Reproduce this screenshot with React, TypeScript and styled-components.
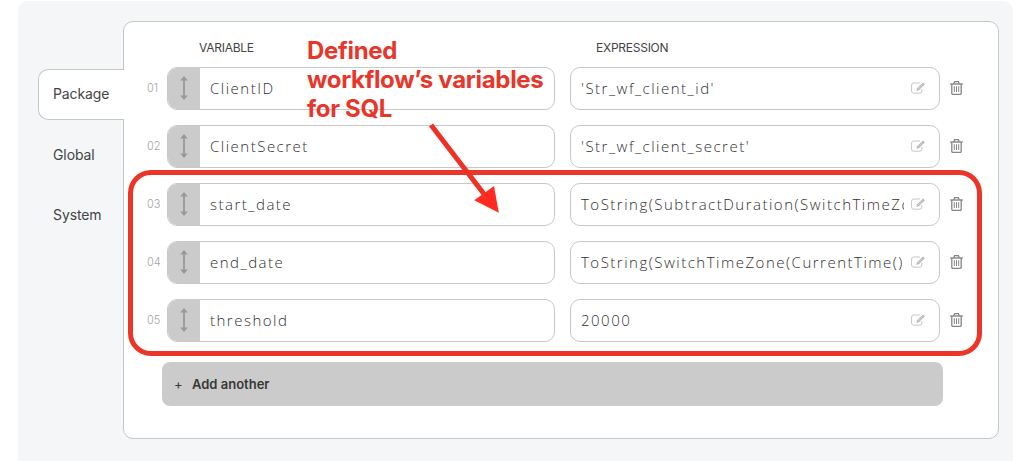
import styled, { createGlobalStyle } from 'styled-components';

interface Variable {
    name: string;
    expression: string;
}

const tabs = ['Package', 'Global', 'System'];

const variables: Variable[] = [
    { name: 'ClientID', expression: "'Str_wf_client_id'" },
    { name: 'ClientSecret', expression: "'Str_wf_client_secret'" },
    {
        name: 'start_date',
        expression: 'ToString(SubtractDuration(SwitchTimeZo',
    },
    { name: 'end_date', expression: 'ToString(SwitchTimeZone(CurrentTime()' },
    { name: 'threshold', expression: '20000' },
];

export default function App() {
    return (
        <>
            <GlobalStyle />
            <Panel>
                <Tabs>
                    {tabs.map((t) => (
                        <Tab key={t} $active={t === 'Package'}>
                            {t}
                        </Tab>
                    ))}
                </Tabs>
                <Card>
                    <Header>
                        <HeaderCell $indent={32}>VARIABLE</HeaderCell>
                        <HeaderCell $indent={26}>EXPRESSION</HeaderCell>
                    </Header>
                    <Rows>
                        {variables.map((v, i) => (
                            <Row key={v.name}>
                                <Index>0{i + 1}</Index>
                                <Field>
                                    <Handle>
                                        <MoveIcon />
                                    </Handle>
                                    <Value>{v.name}</Value>
                                </Field>
                                <Field>
                                    <Value>{v.expression}</Value>
                                    <EditIcon />
                                </Field>
                                <TrashIcon />
                            </Row>
                        ))}
                    </Rows>
                    <AddButton>
                        <Plus>+</Plus>
                        Add another
                    </AddButton>
                </Card>
            </Panel>
            <Highlight />
            <Note>
                Defined
                <br />
                workflow’s variables
                <br />
                for SQL
            </Note>
            <Arrow viewBox="0 0 76 96">
                <path d="M6 5L59 74" stroke="#ee3124" strokeWidth="5" />
                <path d="M49.3 80.3L69 66L73.8 92.7Z" fill="#ff2a20" />
            </Arrow>
        </>
    );
}

function MoveIcon() {
    return (
        <MoveSvg viewBox="0 0 8 24">
            <path d="M4 3V21" stroke="#999" strokeWidth="1.8" />
            <path d="M4 0L7.8 4.6H0.2ZM4 24L7.8 19.4H0.2Z" fill="#999" />
        </MoveSvg>
    );
}

function EditIcon() {
    return (
        <EditSvg viewBox="0 0 14 12" fill="none">
            <path
                d="M9 1H2.6A2 2 0 0 0 .6 3v6.2a2 2 0 0 0 2 2h6.2a2 2 0 0 0 2-2V7"
                stroke="#c6c6c6"
            />
            <path d="M5.4 8.9L6.2 6.2L12 .5L13.8 2.2L8 8Z" fill="#b5b5b5" />
            <path d="M7 7L11.8 2.3" stroke="#eee" strokeWidth="0.5" />
        </EditSvg>
    );
}

function TrashIcon() {
    return (
        <TrashSvg viewBox="0 0 13 14" fill="none" stroke="#858585">
            <path d="M0.2 3H12.8" strokeWidth="1.4" />
            <path d="M3.8 2.7L4.6 0.7H8.4L9.2 2.7" strokeWidth="1.3" />
            <path
                d="M1.8 3V12.2A1.2 1.2 0 0 0 3 13.4H10A1.2 1.2 0 0 0 11.2 12.2V3"
                strokeWidth="1.3"
            />
            <path d="M4.3 5.2V11M6.5 5.2V11M8.7 5.2V11" strokeWidth="1" />
        </TrashSvg>
    );
}

const GlobalStyle = createGlobalStyle`
    * {
        box-sizing: border-box;
    }

    body {
        margin: 0;
        background: #fff;
        color: #444;
        font-family: Inter, sans-serif;
        overflow: hidden;
    }
`;

const Panel = styled.main`
    display: flex;
    align-items: flex-start;
    height: 460px;
    margin: 1px 21px 0 18px;
    padding: 20px 14px 0 20px;
    border-radius: 10px 10px 0 0;
    background: #f4f6f8;
`;

const Tabs = styled.nav`
    display: flex;
    flex-direction: column;
    gap: 9.5px;
    width: 86px;
    margin: 48px -1px 0 0;
    z-index: 1;
`;

const Tab = styled.div<{ $active: boolean }>`
    display: flex;
    align-items: center;
    height: 51px;
    padding: 0 0 2px 14px;
    border: 1px solid ${(p) => (p.$active ? '#c4c7c8' : 'transparent')};
    border-right: none;
    border-radius: 10px 0 0 10px;
    background: ${(p) => (p.$active ? '#fff' : 'transparent')};
    font-size: 14px;
    letter-spacing: -0.1px;
`;

const Card = styled.section`
    width: 876px;
    height: 418px;
    border: 1px solid #c4c7c8;
    border-radius: 10px;
    background: #fff;
`;

const Header = styled.div`
    display: grid;
    grid-template-columns: 388px 370px;
    column-gap: 15px;
    height: 45px;
    padding: 17px 0 0 43px;
    font-size: 12px;
    line-height: 17px;
`;

const HeaderCell = styled.span<{ $indent: number }>`
    padding-left: ${(p) => p.$indent}px;
    letter-spacing: -0.25px;
`;

const Rows = styled.div`
    display: flex;
    flex-direction: column;
    gap: 15px;
`;

const Row = styled.div`
    display: grid;
    grid-template-columns: 20px 388px 370px 13px;
    column-gap: 15px;
    align-items: center;
    margin-left: 8px;
`;

const Index = styled.span`
    width: 20px;
    margin: 0 0 1px 15px;
    color: #a3a3a3;
    font-size: 11px;
    font-weight: 300;
`;

const Field = styled.div`
    display: flex;
    align-items: center;
    height: 43px;
    border: 1px solid #c6c8c9;
    border-radius: 10px;
    background: #fff;
    overflow: hidden;
`;

const Handle = styled.div`
    display: flex;
    align-items: center;
    justify-content: center;
    flex: none;
    width: 33px;
    height: 43px;
    margin-left: -1px;
    background: #cbcbcb;
`;

const MoveSvg = styled.svg`
    width: 8px;
    height: 24px;
    margin-bottom: 1px;
`;

const Value = styled.span`
    flex: 1;
    margin: 0 0 2px 10px;
    overflow: hidden;
    white-space: nowrap;
    font-family: 'Open Sans', sans-serif;
    font-size: 15px;
    font-weight: 300;
    letter-spacing: 1.5px;
    color: #303030;
`;

const EditSvg = styled.svg`
    flex: none;
    width: 14px;
    height: 12px;
    margin: 0 14px 1px 7px;
`;

const TrashSvg = styled.svg`
    width: 13px;
    height: 14px;
    margin: 0 0 1px -5px;
`;

const AddButton = styled.button`
    display: flex;
    align-items: center;
    width: 781px;
    height: 44px;
    margin: 20px 0 0 38px;
    padding: 0 12px;
    border: none;
    border-radius: 8px;
    background: #cbcbcb;
    color: #383838;
    font: 600 13px Inter, sans-serif;
`;

const Plus = styled.span`
    width: 18px;
    font-weight: 400;
    text-align: left;
`;

// Annotation drawn on top of the form
const Highlight = styled.div`
    position: absolute;
    top: 170px;
    left: 128px;
    z-index: 2;
    width: 854px;
    height: 186px;
    border: 5px solid #ec3428;
    border-radius: 23px;
`;

const Note = styled.div`
    position: absolute;
    top: 36px;
    left: 307px;
    z-index: 2;
    color: #e8362b;
    font-size: 24px;
    font-weight: 700;
    line-height: 29px;
    letter-spacing: -0.3px;
    white-space: nowrap;
`;

const Arrow = styled.svg`
    position: absolute;
    top: 120px;
    left: 425px;
    z-index: 2;
    width: 76px;
    height: 96px;
`;
